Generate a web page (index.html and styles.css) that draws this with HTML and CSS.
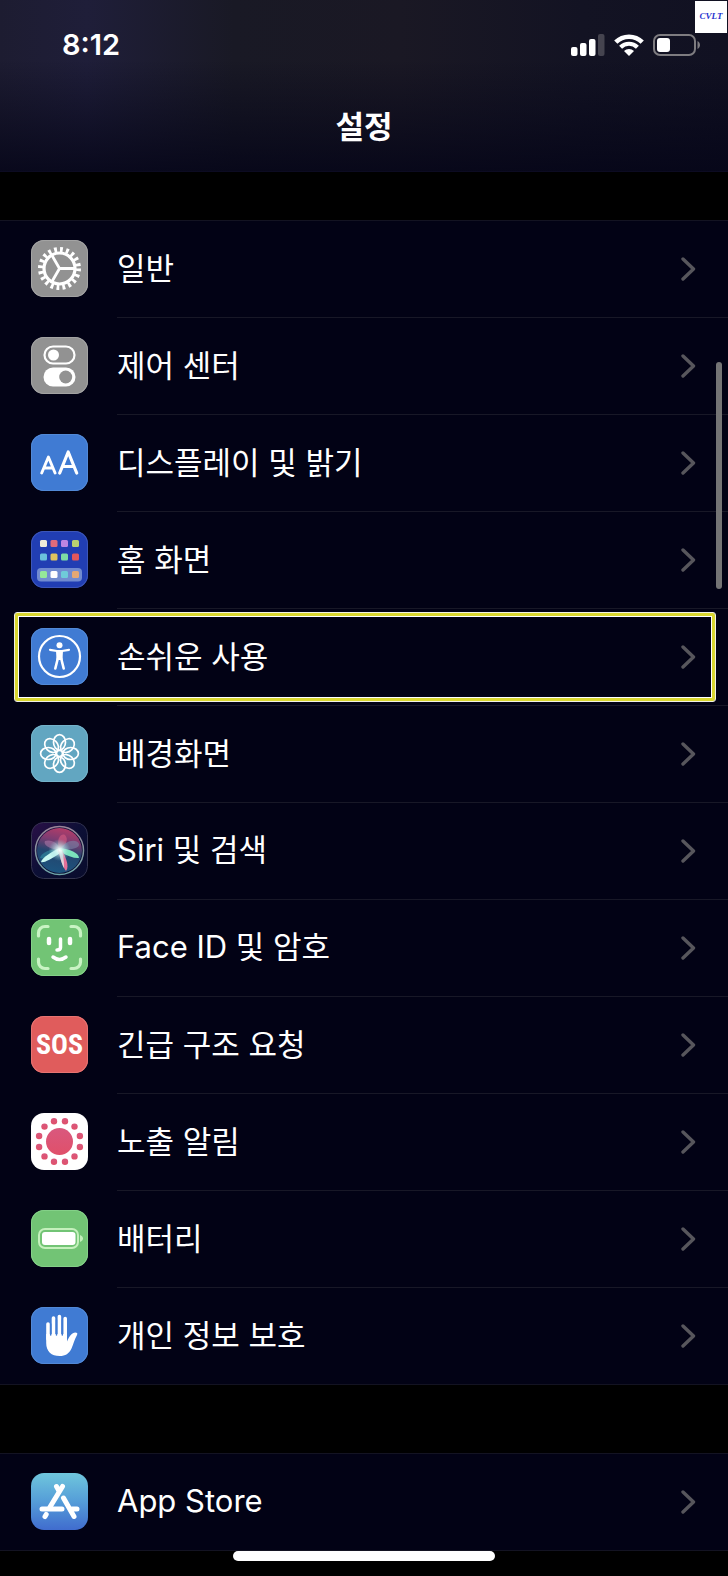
FILE: index.html
```html
<!DOCTYPE html>
<html lang="ko">
<head>
<meta charset="utf-8">
<meta name="viewport" content="width=device-width, initial-scale=1">
<title>설정</title>
<link rel="stylesheet" href="styles.css">
</head>
<body>
<svg class="defs" width="0" height="0" aria-hidden="true">
  <defs>
    <symbol id="chevron" viewBox="0 0 15 24"><path d="M2 2l10.500 10L2 22" fill="none" stroke="#57565c" stroke-width="3.400" stroke-linecap="round" stroke-linejoin="round"/></symbol>
    <linearGradient id="store" x1="0" y1="0" x2="0" y2="1"><stop offset="0" stop-color="#6fc6dc"/><stop offset=".5" stop-color="#559dd8"/><stop offset="1" stop-color="#406cce"/></linearGradient>
    <linearGradient id="virus" x1="0" y1="0" x2="0" y2="1"><stop offset="0" stop-color="#d9587e"/><stop offset="1" stop-color="#e0506a"/></linearGradient>
    <linearGradient id="siribg" x1="0" y1="0" x2="1" y2="1"><stop offset="0" stop-color="#2b1048"/><stop offset=".5" stop-color="#0c0f35"/><stop offset="1" stop-color="#090c2c"/></linearGradient>
    <linearGradient id="siriorb" x1=".6" y1="0" x2=".4" y2="1"><stop offset="0" stop-color="#b43c68"/><stop offset=".28" stop-color="#7d3c72"/><stop offset=".55" stop-color="#23456e"/><stop offset="1" stop-color="#1c5580"/></linearGradient>
    <linearGradient id="siriring" x1="0" y1="0" x2="0" y2="1"><stop offset="0" stop-color="#9a8498"/><stop offset="1" stop-color="#6fa6a8"/></linearGradient>
    <radialGradient id="glow"><stop offset="0" stop-color="#fff"/><stop offset=".25" stop-color="#dffaf6" stop-opacity=".8"/><stop offset="1" stop-color="#7fd0d8" stop-opacity="0"/></radialGradient>
  </defs>
</svg>
<div class="phone">
  <header class="header">
    <div class="status">
      <time class="clock">8:12</time>
      <div class="indicators">
        <svg width="34" height="22" viewBox="0 0 34 22" role="img" aria-label="신호 강도"><g fill="#fff"><rect x="0" y="13" width="6.500" height="9" rx="2"/><rect x="9" y="9" width="6.500" height="13" rx="2"/><rect x="18" y="5" width="6.500" height="17" rx="2"/><rect x="27" y="0" width="6.500" height="22" rx="2" fill="#45444f"/></g></svg>
        <svg width="30" height="22" viewBox="0 0 30 22" role="img" aria-label="Wi-Fi"><g fill="none" stroke="#fff"><path d="M1.800 8.200a18.600 18.600 0 0 1 26.400 0" stroke-width="4.600"/><path d="M6.600 13.200a12 12 0 0 1 16.800 0" stroke-width="4.200"/></g><path d="M15 22l-5-5a7.200 7.200 0 0 1 10 0z" fill="#fff"/></svg>
        <svg width="48" height="22" viewBox="0 0 48 22" role="img" aria-label="배터리"><rect x="1" y="1" width="41" height="20" rx="6" fill="none" stroke="#7e7c80" stroke-width="2"/><rect x="4" y="4" width="13" height="14" rx="3" fill="#fff"/><path d="M44.500 7c3.300 1.500 3.300 6.500 0 8z" fill="#7e7c80"/></svg>
      </div>
    </div>
    <h1 class="title">설정</h1>
  </header>
  <div class="watermark">CVLT</div>

  <main class="content">
    <nav class="group" aria-label="기기 설정">
      <a class="row" href="#general">
        <svg class="icon gray" viewBox="0 0 57 57"><g fill="none" stroke="#fff"><circle cx="28.500" cy="28.500" r="15.500" stroke-width="3.200"/><circle cx="28.500" cy="28.500" r="19" stroke-width="5" stroke-dasharray="2.800 3.169"/><path d="M28.500 28.500h15M28.500 28.500l-7.500-13M28.500 28.500l-7.500 13" stroke-width="2.800"/></g></svg>
        <span class="label">일반</span><svg class="chev"><use href="#chevron"/></svg></a>
      <a class="row" href="#control">
        <svg class="icon gray" viewBox="0 0 57 57"><rect x="13.500" y="9.500" width="30" height="17" rx="8.500" fill="none" stroke="#fff" stroke-width="2.200"/><circle cx="22.500" cy="18" r="5.500" fill="#fff"/><rect x="12.500" y="30.500" width="32" height="19" rx="9.500" fill="#fff"/><circle cx="34.700" cy="40" r="6.500" fill="#929292"/></svg>
        <span class="label">제어 센터</span><svg class="chev"><use href="#chevron"/></svg></a>
      <a class="row" href="#display">
        <svg class="icon blue" viewBox="0 0 57 57"><g fill="none" stroke="#fff" stroke-linecap="round" stroke-linejoin="round"><path d="M10.700 39l6.700-16 6.700 16M13 34h8.800" stroke-width="2.900"/><path d="M28.700 39l8.500-21 8.500 21M31.500 32.500h11.400" stroke-width="3.200"/></g></svg>
        <span class="label">디스플레이 및 밝기</span><svg class="chev"><use href="#chevron"/></svg></a>
      <a class="row" href="#home">
        <svg class="icon home" viewBox="0 0 57 57"><rect x="6" y="37" width="45" height="13.500" rx="4" fill="#718bd0"/><g><rect x="9" y="9" width="7" height="7" rx="1.500" fill="#eeecd9"/><rect x="19.500" y="9" width="7" height="7" rx="1.500" fill="#e16b7b"/><rect x="30" y="9" width="7" height="7" rx="1.500" fill="#bc86e2"/><rect x="41" y="9" width="7" height="7" rx="1.500" fill="#b9d271"/><rect x="9" y="22.500" width="7" height="7" rx="1.500" fill="#6bc2dc"/><rect x="19.500" y="22.500" width="7" height="7" rx="1.500" fill="#dfc35e"/><rect x="30" y="22.500" width="7" height="7" rx="1.500" fill="#7ddca5"/><rect x="41" y="22.500" width="7" height="7" rx="1.500" fill="#e2575c"/><rect x="9" y="40" width="7" height="7" rx="1.500" fill="#95e899"/><rect x="19.500" y="40" width="7" height="7" rx="1.500" fill="#fff"/><rect x="30" y="40" width="7" height="7" rx="1.500" fill="#6fcbd9"/><rect x="41" y="40" width="7" height="7" rx="1.500" fill="#e5a873"/></g></svg>
        <span class="label">홈 화면</span><svg class="chev"><use href="#chevron"/></svg></a>
      <a class="row selected" href="#accessibility">
        <svg class="icon blue" viewBox="0 0 57 57"><circle cx="28.500" cy="28.500" r="20.500" fill="none" stroke="#fff" stroke-width="2.200"/><circle cx="28.500" cy="17.300" r="3" fill="#fff"/><g fill="none" stroke="#fff" stroke-linecap="round" stroke-linejoin="round"><path d="M19 21.800l7 1.200h5l7-1.200" stroke-width="2.200"/><path d="M26.800 30.500L24.300 40.500M30.200 30.500l2.500 10" stroke-width="2.600"/></g><path d="M25 22.500h7l-.5 9.500h-6z" fill="#fff"/></svg>
        <span class="label">손쉬운 사용</span><svg class="chev"><use href="#chevron"/></svg></a>
      <a class="row" href="#wallpaper">
        <svg class="icon teal" viewBox="0 0 57 57"><g fill="none" stroke="#fff" stroke-width="1.700"><circle cx="28.500" cy="28.500" r="3"/><ellipse cx="28.500" cy="17.300" rx="6" ry="7.700"/><ellipse cx="28.500" cy="17.300" rx="6" ry="7.700" transform="rotate(45 28.500 28.500)"/><ellipse cx="28.500" cy="17.300" rx="6" ry="7.700" transform="rotate(90 28.500 28.500)"/><ellipse cx="28.500" cy="17.300" rx="6" ry="7.700" transform="rotate(135 28.500 28.500)"/><ellipse cx="28.500" cy="17.300" rx="6" ry="7.700" transform="rotate(180 28.500 28.500)"/><ellipse cx="28.500" cy="17.300" rx="6" ry="7.700" transform="rotate(225 28.500 28.500)"/><ellipse cx="28.500" cy="17.300" rx="6" ry="7.700" transform="rotate(270 28.500 28.500)"/><ellipse cx="28.500" cy="17.300" rx="6" ry="7.700" transform="rotate(315 28.500 28.500)"/></g></svg>
        <span class="label">배경화면</span><svg class="chev"><use href="#chevron"/></svg></a>
      <a class="row" href="#siri">
        <svg class="icon siri" viewBox="0 0 57 57"><rect width="57" height="57" fill="url(#siribg)"/><circle cx="28.500" cy="28.500" r="22.500" fill="url(#siriorb)"/><path d="M28 28C17 27 12 22 14 19c6-2 14 2 15 9z" fill="#c88ab8" opacity=".45"/><path d="M28 28C25 16 30 11 34 13c4 4 1 11-5 15z" fill="#d85b82" opacity=".6"/><path d="M28 28c7-11 18-11 20-6 1 4-8 6-20 6z" fill="#7c83a6" opacity=".6"/><path d="M28 28c-8-2-18 3-19 8 8 2 15-2 19-8z" fill="#3bb3bb" opacity=".4"/><path d="M29 26c-8 3-18 10-19 14q3 2 21-10z" fill="#c8f8f1"/><path d="M28 26c11 1 20 5 20 10q-6 1-21-7z" fill="#7be2bb"/><path d="M27 28c2 8 5 18 8 21 4-5-1-15-4-21z" fill="#e36f99"/><path d="M28 28c1 8 3 15 5 18 0-3 0-10-2-18z" fill="#dffcf5" opacity=".7"/><circle cx="28.500" cy="28" r="11" fill="url(#glow)"/><circle cx="28.500" cy="28.500" r="24" fill="none" stroke="url(#siriring)" stroke-width="1.500"/><rect x=".5" y=".5" width="56" height="56" rx="12" fill="none" stroke="#35364f"/></svg>
        <span class="label"><span class="latin">Siri</span> 및 검색</span><svg class="chev"><use href="#chevron"/></svg></a>
      <a class="row" href="#faceid">
        <svg class="icon green" viewBox="0 0 57 57"><g fill="none" stroke-linecap="round"><path d="M7.500 17v-3a6.500 6.500 0 0 1 6.500-6.500h3M40 7.500h3a6.500 6.500 0 0 1 6.500 6.500v3M49.500 40v3a6.500 6.500 0 0 1-6.500 6.500h-3M17 49.500h-3A6.500 6.500 0 0 1 7.500 43v-3" stroke="#c9f3c4" stroke-width="3.200"/><path d="M18 20v4M39 20v4" stroke="#fff" stroke-width="4.500"/><path d="M29.500 20v8.500q0 2.500-3.500 2.500M22 38q6.500 5 13 0" stroke="#fff" stroke-width="3.500"/></g></svg>
        <span class="label"><span class="latin">Face ID</span> 및 암호</span><svg class="chev"><use href="#chevron"/></svg></a>
      <a class="row" href="#sos">
        <span class="icon red">SOS</span>
        <span class="label">긴급 구조 요청</span><svg class="chev"><use href="#chevron"/></svg></a>
      <a class="row" href="#exposure">
        <svg class="icon white" viewBox="0 0 57 57"><g fill="url(#virus)"><circle cx="28.500" cy="28.500" r="13.500"/><circle cx="23" cy="8.200" r="3.200"/><circle cx="34" cy="8.200" r="3.200"/><circle cx="13.500" cy="13.600" r="3.200"/><circle cx="43.500" cy="13.600" r="3.200"/><circle cx="8.100" cy="23" r="3.200"/><circle cx="48.900" cy="23" r="3.200"/><circle cx="8.100" cy="34" r="3.200"/><circle cx="48.900" cy="34" r="3.200"/><circle cx="13.500" cy="43.400" r="3.200"/><circle cx="43.500" cy="43.400" r="3.200"/><circle cx="23" cy="48.800" r="3.200"/><circle cx="34" cy="48.800" r="3.200"/></g></svg>
        <span class="label">노출 알림</span><svg class="chev"><use href="#chevron"/></svg></a>
      <a class="row" href="#battery">
        <svg class="icon green" viewBox="0 0 57 57"><rect x="8" y="19" width="39" height="19" rx="6" fill="none" stroke="#c5f0bd" stroke-width="2"/><rect x="11" y="22" width="33.500" height="13" rx="3" fill="#fff"/><path d="M49 25c4 1.500 4 5.500 0 7z" fill="#c5f0bd"/></svg>
        <span class="label">배터리</span><svg class="chev"><use href="#chevron"/></svg></a>
      <a class="row" href="#privacy">
        <svg class="icon blue" viewBox="0 0 57 57"><path d="M17 17v15M22.500 11v19M28.400 9.500v20M34.200 11.500v19" fill="none" stroke="#fff" stroke-width="3.600" stroke-linecap="round"/><path d="M15.200 27h20.800v7.500c2.400-5.500 5-8.700 8.200-9q3.200.1 1.700 2.700c-2.700 5-3.400 8.800-5.400 13.300-2.200 5-6.200 7.500-11.700 7.500-8.500 0-13.600-4.500-13.600-13z" fill="#fff"/><path d="M19.700 17v11M25.500 13v15M31.300 13v15" stroke="#407bd3" stroke-width="1.500" stroke-linecap="round"/></svg>
        <span class="label">개인 정보 보호</span><svg class="chev"><use href="#chevron"/></svg></a>
    </nav>
    <nav class="group" aria-label="스토어">
      <a class="row" href="#appstore">
        <svg class="icon" viewBox="0 0 57 57"><rect width="57" height="57" fill="url(#store)"/><g fill="none" stroke="#fff" stroke-width="5" stroke-linecap="round"><path d="M31.500 13.500L19 34"/><path d="M25.500 13.500l2 3.500"/><path d="M11 36h20M41 36h5"/><path d="M15.200 41.500l-1.200 2"/><path d="M32.500 25l10.500 18.500"/></g></svg>
        <span class="label"><span class="latin">App Store</span></span><svg class="chev"><use href="#chevron"/></svg></a>
    </nav>
    <div class="scrollbar"></div>
  </main>
  <footer class="bottom"><div class="indicator"></div></footer>
</div>
</body>
</html>
```
FILE: styles.css
```css
* { box-sizing: border-box; }
body { margin: 0; background: #000; color: #fff; font-family: "Noto Sans CJK KR", sans-serif; }
.defs { position: absolute; }
.phone { position: relative; display: flex; flex-direction: column; min-height: 100vh; }
.header {
  padding-bottom: 23px;
  border-bottom: 1px solid #0c0b22;
  background:
    linear-gradient(to bottom, rgba(5, 5, 24, 0) 35%, rgba(5, 5, 24, .85) 100%),
    linear-gradient(to right, #1d1c31 0%, #1f1e39 12%, #191925 32%, #1a1824 55%, #131323 80%, #111122 100%);
}
.status { display: flex; align-items: center; justify-content: space-between; height: 90px; padding: 0 27px 0 62px; }
.clock { font: 600 29px/36px Inter, sans-serif; }
.indicators { display: flex; align-items: center; gap: 9px; }
.title { margin: 12px 0 0; font-size: 31px; font-weight: 700; line-height: 46px; text-align: center; }
.watermark {
  position: absolute; top: 1px; right: 1px; width: 32px; height: 32px;
  background: #fff; color: #2733cf; font: italic 700 9px/31px "Liberation Serif", serif; text-align: center;
}
.content { position: relative; display: flex; flex-direction: column; gap: 69px; padding-top: 48px; }
.group { background: #020215; box-shadow: inset 0 1px #131322, 0 1px #131322; }
.row { position: relative; display: flex; align-items: center; height: 97px; padding: 0 32px 0 31px; color: #fff; text-decoration: none; }
.row + .row::before { content: ""; position: absolute; top: 0; left: 117px; right: 0; height: 1px; background: #181827; }
.icon { flex: none; width: 57px; height: 57px; border-radius: 13px; overflow: hidden; margin-right: 29px; }
.label { flex: 1; padding-bottom: 4px; font-size: 31px; line-height: 46px; }
.latin { font-family: Inter, sans-serif; }
.chev { flex: none; width: 15px; height: 24px; }
.gray { background: #929292; box-shadow: inset 0 0 0 1px #a3a3a3; }
.blue { background: #407bd3; box-shadow: inset 0 0 0 1px #5289d6; }
.home { background: #213eb3; box-shadow: inset 0 0 0 1px #3c56b8; }
.teal { background: #62a6c1; box-shadow: inset 0 0 0 1px #75b3ca; }
.green { background: #72c475; box-shadow: inset 0 0 0 1px #84d088; }
.red { background: #e05c5c; box-shadow: inset 0 0 0 1px #e77472; font: 700 28px/57px "Roboto Condensed", Roboto, sans-serif; text-align: center; }
.white { background: #fff; }
.selected::after {
  content: ""; position: absolute; inset: 4px 12px 3px 14px;
  border: 1px solid #f0f0e4; border-radius: 3px;
  box-shadow: inset 0 0 0 3px #d9d62f, inset 0 0 0 4px #fff;
}
.scrollbar { position: absolute; top: 190px; right: 6px; width: 6px; height: 227px; border-radius: 3px; background: #747475; }
.bottom { display: flex; justify-content: center; padding-top: 1px; }
.indicator { width: 36%; height: 10px; border-radius: 5px; background: #fff; }
```
